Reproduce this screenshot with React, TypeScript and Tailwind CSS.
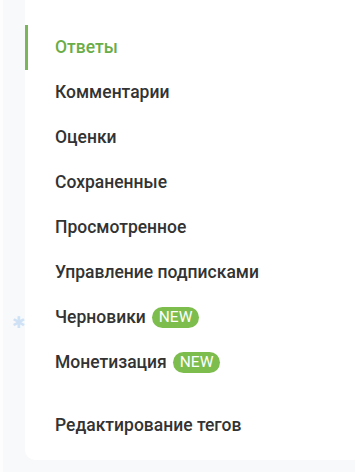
import React from "react";

const items: { label: string; active?: boolean; badge?: boolean }[] = [
  { label: "Ответы", active: true },
  { label: "Комментарии" },
  { label: "Оценки" },
  { label: "Сохраненные" },
  { label: "Просмотренное" },
  { label: "Управление подписками" },
  { label: "Черновики", badge: true },
  { label: "Монетизация", badge: true },
];

function Item({ label, active, badge }: { label: string; active?: boolean; badge?: boolean }) {
  return (
    <div className="relative flex h-[45px] items-center pl-[30px]">
      {active && <div className="absolute left-0 top-0 h-[45px] w-[3px] bg-[#7cb65a]" />}
      <span className={`text-[17.5px] font-medium ${active ? "text-[#6aad47]" : "text-[#333333]"}`}>{label}</span>
      {badge && (
        <span className="ml-[6px] flex h-[21px] items-center rounded-full bg-[#7dbd4e] px-[7px] text-[15.5px] font-normal text-white">
          NEW
        </span>
      )}
    </div>
  );
}

export default function App() {
  return (
    <div
      className="relative flex h-[472px] w-[355px] overflow-hidden bg-[#f8f9fb]"
      style={{ fontFamily: "Roboto, 'Noto Sans', sans-serif" }}
    >
      <div className="h-full w-[3px] bg-[#fdfdfe]" />
      <span className="absolute left-[12px] top-[315px] text-[16px] leading-none text-[#cfe2f5]">✱</span>
      <div className="ml-[22px] flex h-[460px] flex-1 flex-col rounded-bl-[10px] bg-white pt-[25px]">
        {items.map((it) => (
          <Item key={it.label} {...it} />
        ))}
        <div className="mt-[18px]">
          <Item label="Редактирование тегов" />
        </div>
      </div>
    </div>
  );
}
